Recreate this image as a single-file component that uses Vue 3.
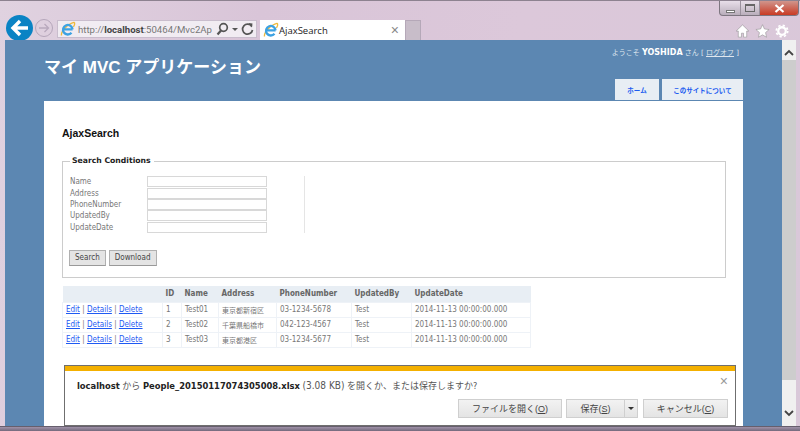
<script setup>
const labels = ['Name', 'Address', 'PhoneNumber', 'UpdatedBy', 'UpdateDate']
const columns = ['ID', 'Name', 'Address', 'PhoneNumber', 'UpdatedBy', 'UpdateDate']
const people = [
  { id: 1, name: 'Test01', address: '東京都新宿区', phone: '03-1234-5678' },
  { id: 2, name: 'Test02', address: '千葉県船橋市', phone: '042-123-4567' },
  { id: 3, name: 'Test03', address: '東京都港区', phone: '03-1234-5677' }
]
</script>

<template>
  <div class="window">
    <div class="chrome">
      <div class="nav">
        <div class="back">
          <svg width="24" height="24" viewBox="0 0 24 24"><path d="M20 12H6M12 5l-7 7 7 7" fill="none" stroke="#fff" stroke-width="3.4"/></svg>
        </div>
        <div class="forward">
          <svg width="14" height="14" viewBox="0 0 14 14"><path d="M2 7h9M7.500 3l4 4-4 4" fill="none" stroke="#b9a9bd" stroke-width="1.300"/></svg>
        </div>
        <div class="address">
          <svg class="ie" width="16" height="16" viewBox="0 0 16 16">
            <path d="M1.500 14.500C.5 11 8 2.500 14 1.400c1.500.8.300 3-.6 4.400" fill="none" stroke="#eeb93a" stroke-width="1.300"/>
            <path d="M4 8.300h8.600M12.600 8.300A4.800 4.800 0 1 0 11.500 11.800" fill="none" stroke="#3da2e2" stroke-width="2.300"/>
          </svg>
          <span class="url">http://<b>localhost</b>:50464/Mvc2Ap</span>
          <svg class="tool" width="13" height="14" viewBox="0 0 13 14"><circle cx="7.500" cy="5.500" r="3.800" fill="none" stroke="#555" stroke-width="1.700"/><path d="M5 8.500 1.500 12.500" stroke="#555" stroke-width="2.200"/></svg>
          <span class="caret"></span>
          <svg class="tool" width="13" height="14" viewBox="0 0 13 14"><path d="M10.800 4.500A5 5 0 1 0 11.500 8" fill="none" stroke="#555" stroke-width="1.700"/><path d="M7.500 1l4 .4-.6 4z" fill="#555"/></svg>
        </div>
        <div class="tab">
          <svg width="16" height="16" viewBox="0 0 16 16">
            <path d="M1.500 14.500C.5 11 8 2.500 14 1.400c1.500.8.300 3-.6 4.400" fill="none" stroke="#eeb93a" stroke-width="1.300"/>
            <path d="M4 8.300h8.600M12.600 8.300A4.800 4.800 0 1 0 11.500 11.800" fill="none" stroke="#3da2e2" stroke-width="2.300"/>
          </svg>
          <span class="tab-title">AjaxSearch</span>
          <span class="tab-close">×</span>
        </div>
        <div class="new-tab"></div>
      </div>
      <div class="right-tools">
        <div class="caption">
          <span class="cap-btn minimize"><i class="min"></i></span>
          <span class="cap-btn maximize"><i class="max"></i></span>
          <span class="cap-btn close">
            <svg width="11" height="9" viewBox="0 0 11 9"><path d="M1.500 1l8 7M9.500 1l-8 7" stroke="#fff" stroke-width="2.200"/></svg>
          </span>
        </div>
        <div class="icons">
          <svg width="15" height="14" viewBox="0 0 16 16"><path d="M8 1 .8 8h2.400v7h3.600v-4.500h2.400V15h3.600V8h2.400z" fill="#fff" stroke="#8a8a8a" stroke-width=".6"/></svg>
          <svg width="15" height="14" viewBox="0 0 16 16"><path d="m8 .8 2.200 4.900 5.300.6-4 3.500 1.100 5.300L8 12.400l-4.600 2.700 1.100-5.300-4-3.500 5.300-.6z" fill="#fff" stroke="#8a8a8a" stroke-width=".6"/></svg>
          <svg width="14" height="14" viewBox="0 0 16 16"><circle cx="8" cy="8" r="4.300" fill="none" stroke="#fff" stroke-width="2.600"/><circle cx="8" cy="8" r="6.500" fill="none" stroke="#fff" stroke-width="2" stroke-dasharray="2.600 2.500"/></svg>
        </div>
      </div>
    </div>

    <div class="viewport">
      <div class="page">
        <header class="site-head">
          <h1>マイ MVC アプリケーション</h1>
          <div class="head-right">
            <div class="login">ようこそ <b>YOSHIDA</b> さん [ <a>ログオフ</a> ]</div>
            <nav class="menu">
              <a class="home">ホーム</a>
              <a class="about">このサイトについて</a>
            </nav>
          </div>
        </header>

        <main class="main">
          <h2>AjaxSearch</h2>
          <fieldset>
            <legend>Search Conditions</legend>
            <div class="fields">
              <div class="field-list">
                <div v-for="label in labels" :key="label" class="field">
                  <label>{{ label }}</label>
                  <span class="input"></span>
                </div>
              </div>
            </div>
            <div class="buttons">
              <span class="btn">Search</span>
              <span class="btn">Download</span>
            </div>
          </fieldset>

          <table>
            <thead>
              <tr>
                <th class="actions"></th>
                <th v-for="col in columns" :key="col">{{ col }}</th>
              </tr>
            </thead>
            <tbody>
              <tr v-for="p in people" :key="p.id">
                <td class="actions"><a>Edit</a> | <a>Details</a> | <a>Delete</a></td>
                <td>{{ p.id }}</td>
                <td>{{ p.name }}</td>
                <td class="jp">{{ p.address }}</td>
                <td>{{ p.phone }}</td>
                <td>Test</td>
                <td>2014-11-13 00:00:00.000</td>
              </tr>
            </tbody>
          </table>
        </main>

        <div class="notify">
          <div class="notify-bar"></div>
          <span class="notify-close">×</span>
          <p><b>localhost</b> から <b>People_20150117074305008.xlsx</b> <span class="size">(3.08 KB)</span> を開くか、または保存しますか?</p>
          <div class="notify-actions">
            <span class="nbtn open">ファイルを開く(<u>O</u>)</span>
            <span class="split">
              <span class="nbtn save">保存(<u>S</u>)</span>
              <span class="nbtn drop"><i></i></span>
            </span>
            <span class="nbtn cancel">キャンセル(<u>C</u>)</span>
          </div>
        </div>
      </div>

      <div class="scrollbar">
        <div class="arrow">
          <svg width="10" height="7" viewBox="0 0 10 7"><path d="M1 6l4-4 4 4" fill="none" stroke="#444" stroke-width="1.800"/></svg>
        </div>
        <div class="thumb"></div>
        <div class="arrow down">
          <svg width="10" height="7" viewBox="0 0 10 7"><path d="M1 1l4 4 4-4" fill="none" stroke="#444" stroke-width="1.800"/></svg>
        </div>
      </div>
    </div>
    <div class="frame-bottom"></div>
  </div>
</template>

<style>
html, body {
  margin: 0;
  overflow: hidden;
}
</style>

<style scoped>
.window {
  width: 800px;
  height: 431px;
  box-sizing: border-box;
  padding: 0 4px 0 5px;
  display: flex;
  flex-direction: column;
  overflow: hidden;
  font-family: "Liberation Sans", "Noto Sans CJK JP", sans-serif;
  background: linear-gradient(100deg, #e0d2e0 0%, #d9c5d8 30%, #dcc8da 60%, #d9c8d9 100%);
  border-top: 1px solid #8d8290;
}

.chrome {
  height: 39px;
  flex: none;
  display: flex;
  justify-content: space-between;
}

.nav {
  display: flex;
  align-items: flex-end;
  position: relative;
}

.back {
  width: 27px;
  height: 26px;
  margin: 14px 0 0 1px;
  border-radius: 50%;
  background: #0a83c4;
  display: flex;
  align-items: center;
  justify-content: center;
  align-self: flex-start;
}

.forward {
  width: 18px;
  height: 18px;
  margin: 18px 0 0 2px;
  align-self: flex-start;
  border-radius: 50%;
  border: 1px solid #b5a6ba;
  box-sizing: border-box;
  display: flex;
  align-items: center;
  justify-content: center;
}

.address {
  width: 200px;
  height: 18px;
  margin: 19px 3px 0 4px;
  align-self: flex-start;
  box-sizing: border-box;
  background: #f1ecf2;
  border: 1px solid #c9bdcd;
  display: flex;
  align-items: center;
  padding: 0 2px;
  font-size: 11px;
  color: #777;
}

.url {
  width: 136px;
  margin: 0 3px 0 2px;
  white-space: nowrap;
  font-family: Roboto, "Liberation Sans", sans-serif;
  font-size: 9.600px;
}

.url b {
  color: #444;
  font-weight: 700;
}

.ie,
.tool {
  flex: none;
}

.caret {
  width: 0;
  height: 0;
  border: 3px solid transparent;
  border-top: 3px solid #555;
  margin: 3px 3px 0;
}

.tab {
  width: 145px;
  height: 20px;
  box-sizing: border-box;
  background: #fff;
  padding: 0 6px 0 3px;
  display: flex;
  align-items: center;
  color: #222;
}

.tab-title {
  flex: 1;
  font-family: "Open Sans", "Liberation Sans", sans-serif;
  font-size: 9.500px;
}

.tab-close {
  color: #888;
  font-size: 14px;
}

.new-tab {
  width: 16px;
  height: 20px;
  background: #c8bdc9;
  border: 1px solid #b5a8b8;
  border-bottom: 0;
  box-sizing: border-box;
}

.right-tools {
  display: flex;
  flex-direction: column;
  align-items: flex-end;
}

.caption {
  display: flex;
  border: 1px solid #7d7680;
  border-top: 0;
  border-radius: 0 0 4px 4px;
  height: 14px;
  margin-right: -3px;
  overflow: hidden;
  background: linear-gradient(#e8dfe9, #b9aebb);
}

.cap-btn {
  display: flex;
  align-items: center;
  justify-content: center;
  border-right: 1px solid #9a919d;
}

.minimize { width: 20px; }
.maximize { width: 18px; }

.cap-btn .min {
  width: 9px;
  height: 3px;
  background: #fff;
  border: 1px solid #777;
  margin-top: 6px;
  box-sizing: border-box;
}

.cap-btn .max {
  width: 10px;
  height: 8px;
  border: 1px solid #666;
  border-top-width: 2px;
  box-sizing: border-box;
}

.cap-btn.close {
  width: 38px;
  border: 0;
  background: linear-gradient(#d0958c, #c93b24);
}

.icons {
  display: flex;
  gap: 5px;
  margin: 8px 7px 0 0;
}

.viewport {
  flex: 1;
  min-height: 0;
  display: flex;
}

.page {
  flex: 1;
  min-width: 0;
  background: #5c87b2;
  position: relative;
  overflow: hidden;
}

.site-head {
  height: 61px;
  display: flex;
  justify-content: space-between;
  padding: 0 39px;
  color: #fff;
}

h1 {
  margin: 15px 0 0;
  font-size: 17px;
  font-weight: 700;
  line-height: 26px;
  color: #fff;
}

.head-right {
  display: flex;
  flex-direction: column;
  align-items: flex-end;
  justify-content: space-between;
}

.login {
  margin: 7px 4px 0 0;
  font-family: "DejaVu Sans", "Noto Sans CJK JP", sans-serif;
  font-size: 7px;
  line-height: 11px;
  color: #dfe6ee;
}

.login b {
  font-size: 8px;
  color: #fff;
}

.login a {
  text-decoration: underline;
}

.menu {
  display: flex;
  gap: 3px;
  margin-bottom: 1px;
}

.menu a {
  height: 21px;
  display: flex;
  align-items: center;
  justify-content: center;
  background: #e8eef4;
  color: #1b5cf0;
  font-size: 6.500px;
  font-weight: 700;
  font-family: "Noto Sans CJK JP", sans-serif;
}

.home { width: 44px; }
.about { width: 81px; }

.main {
  margin: 0 39px;
  background: #fff;
  padding: 26px 18px 0;
  height: 400px;
  box-sizing: border-box;
}

h2 {
  margin: 0;
  font-size: 10.500px;
  line-height: 12px;
  font-weight: 700;
  color: #111;
}

fieldset {
  margin: 17px 0 0;
  padding: 0 7px;
  height: 122px;
  width: 664px;
  box-sizing: border-box;
  border: 1px solid #ccc;
  font-family: "DejaVu Sans Condensed", "DejaVu Sans", sans-serif;
}

legend {
  padding: 0 3px 0 2px;
  font-family: "DejaVu Sans", sans-serif;
  font-size: 7.700px;
  font-weight: 700;
  line-height: 10px;
  color: #222;
}

.fields {
  margin-top: 10px;
}

.field-list {
  width: 234px;
  border-right: 1px solid #e5e5e5;
}

.field {
  display: flex;
  height: 11.400px;
  align-items: center;
}

.field label {
  width: 77px;
  font-size: 8px;
  color: #777;
}

.input {
  width: 120px;
  height: 11px;
  box-sizing: border-box;
  border: 1px solid #d8d8d8;
  background: #fff;
}

.buttons {
  display: flex;
  gap: 3px;
  margin-top: 17px;
  margin-left: -1px;
}

.btn {
  height: 14px;
  padding: 0 5px;
  display: flex;
  align-items: center;
  background: #e4e4e4;
  border: 1px solid #b0b0b0;
  border-bottom-color: #999;
  font-size: 8px;
  color: #444;
}

table {
  margin-top: 8px;
  border-collapse: collapse;
  width: 469px;
  font-family: "DejaVu Sans Condensed", "DejaVu Sans", "Noto Sans CJK JP", sans-serif;
  font-size: 8px;
  color: #777;
  table-layout: fixed;
}

th {
  box-sizing: border-box;
  background: #e8eef4;
  height: 16px;
  padding: 0 0 0 3px;
  text-align: left;
  color: #666;
  font-weight: 700;
  white-space: nowrap;
}

td {
  height: 14px;
  padding: 0 0 0 3px;
  border: 1px solid #eef2f7;
  white-space: nowrap;
}

.actions { width: 100px; }
th:nth-child(2) { width: 19px; }
th:nth-child(3) { width: 37px; }
th:nth-child(4) { width: 58px; }
th:nth-child(5) { width: 75px; }
th:nth-child(6) { width: 60px; }

.jp {
  font-family: "Noto Sans CJK JP", sans-serif;
  font-size: 7px;
}

td a {
  color: #1f5af3;
  text-decoration: underline;
}

.notify {
  position: absolute;
  left: 59px;
  top: 325px;
  width: 672px;
  height: 61px;
  box-sizing: border-box;
  background: #fff;
  border: 1px solid #6f6f6f;
}

.notify-bar {
  height: 5px;
  background: #f4b000;
}

.notify-close {
  position: absolute;
  right: 7px;
  top: 8px;
  font-size: 14px;
  line-height: 14px;
  color: #999;
}

.notify p {
  margin: 8px 0 0 12px;
  font-size: 9px;
  line-height: 14px;
  color: #555;
  font-family: "DejaVu Sans Condensed", "Noto Sans CJK JP", sans-serif;
}

.notify p b {
  font-size: 9.300px;
  color: #222;
}

.notify p .size {
  font-size: 10px;
}

.notify-actions {
  display: flex;
  justify-content: flex-end;
  margin: 6px 7px 0 0;
}

.split {
  display: flex;
  margin: 0 5px 0 4px;
}

.nbtn {
  height: 19px;
  box-sizing: border-box;
  display: flex;
  align-items: center;
  justify-content: center;
  background: linear-gradient(#f2f2f2, #e4e4e4);
  border: 1px solid #cfcfcf;
  font-size: 9px;
  color: #444;
  white-space: pre;
}

.open { width: 104px; }
.save { width: 59px; }
.cancel { width: 85px; }

.drop {
  width: 13px;
  border-left: 0;
}

.drop i {
  width: 0;
  height: 0;
  border: 3px solid transparent;
  border-top: 3px solid #333;
  margin-top: 3px;
}

.scrollbar {
  width: 14px;
  flex: none;
  background: #f0f0f0;
  display: flex;
  flex-direction: column;
}

.arrow {
  height: 20px;
  padding-top: 4px;
  box-sizing: border-box;
  display: flex;
  align-items: center;
  justify-content: center;
}

.thumb {
  height: 320px;
  background: #cdcdcd;
}

.arrow.down {
  margin-top: auto;
  height: 22px;
  padding: 0 0 4px;
}

.frame-bottom {
  flex: none;
  height: 5px;
  margin: 0 -4px 0 -5px;
  background: linear-gradient(#4d4852 0, #9a8da3 30%, #74697c 100%);
}
</style>
